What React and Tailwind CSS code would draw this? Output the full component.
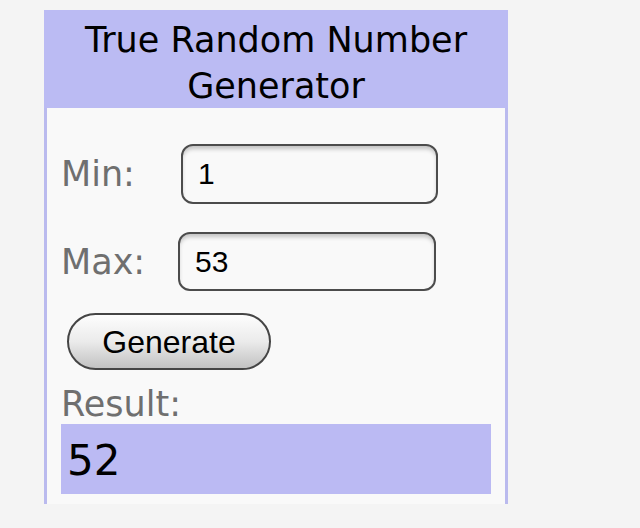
export default function App() {
  return (
    <div className="min-h-[528px] w-[640px] bg-[#f4f4f4] pl-[44px] pt-[10px]" style={{ fontFamily: '"DejaVu Sans", sans-serif' }}>
      <div className="w-[464px]">
        <div className="h-[98px] bg-[#bbbbf3] pt-[7px] text-center text-[35px] leading-[46px] text-black" style={{ fontFamily: '"DejaVu Sans", sans-serif' }}>
          True Random Number
          <br />
          Generator
        </div>
        <div className="flex h-[396px] flex-col border-x-[3px] border-[#babaee] bg-[#f9f9f9] pt-[36px]">
          <div className="flex h-[60px] items-center">
            <span className="w-[134px] shrink-0 pl-[14px] text-[35px] leading-[40px] text-[#6f6f6f]">Min:</span>
            <input
              readOnly
              value="1"
              className="h-[60px] w-[257px] rounded-[12px] border-[2.5px] border-[#4c4c4c] bg-[#f9f9f9] pl-[15px] text-[30px] text-black shadow-[inset_0_4px_4px_-1px_rgba(0,0,0,0.22)] outline-none"
              style={{ fontFamily: '"Liberation Sans", Arial, sans-serif' }}
            />
          </div>
          <div className="mt-[28px] flex h-[59px] items-center">
            <span className="w-[131px] shrink-0 pl-[14px] text-[35px] leading-[40px] text-[#6f6f6f]">Max:</span>
            <input
              readOnly
              value="53"
              className="h-[59px] w-[258px] rounded-[12px] border-[2.5px] border-[#4c4c4c] bg-[#f9f9f9] pl-[15px] text-[30px] text-black shadow-[inset_0_4px_4px_-1px_rgba(0,0,0,0.22)] outline-none"
              style={{ fontFamily: '"Liberation Sans", Arial, sans-serif' }}
            />
          </div>
          <div className="mt-[22px] pl-[20px]">
            <button
              className="h-[57px] w-[204px] rounded-full border-2 border-[#454545] bg-linear-to-b from-[#fdfdfd] via-[#ebebeb] to-[#c2c2c2] text-[32px] text-black"
              style={{ fontFamily: '"Liberation Sans", Arial, sans-serif' }}
            >
              Generate
            </button>
          </div>
          <div className="mt-[14px] pl-[14px] text-[35px] leading-[40px] text-[#6f6f6f]">Result:</div>
          <div className="mx-[14px] h-[70px] bg-[#bbbaf3] pl-[6px] pt-[16px] text-[42px] leading-none text-black">52</div>
        </div>
      </div>
    </div>
  );
}
